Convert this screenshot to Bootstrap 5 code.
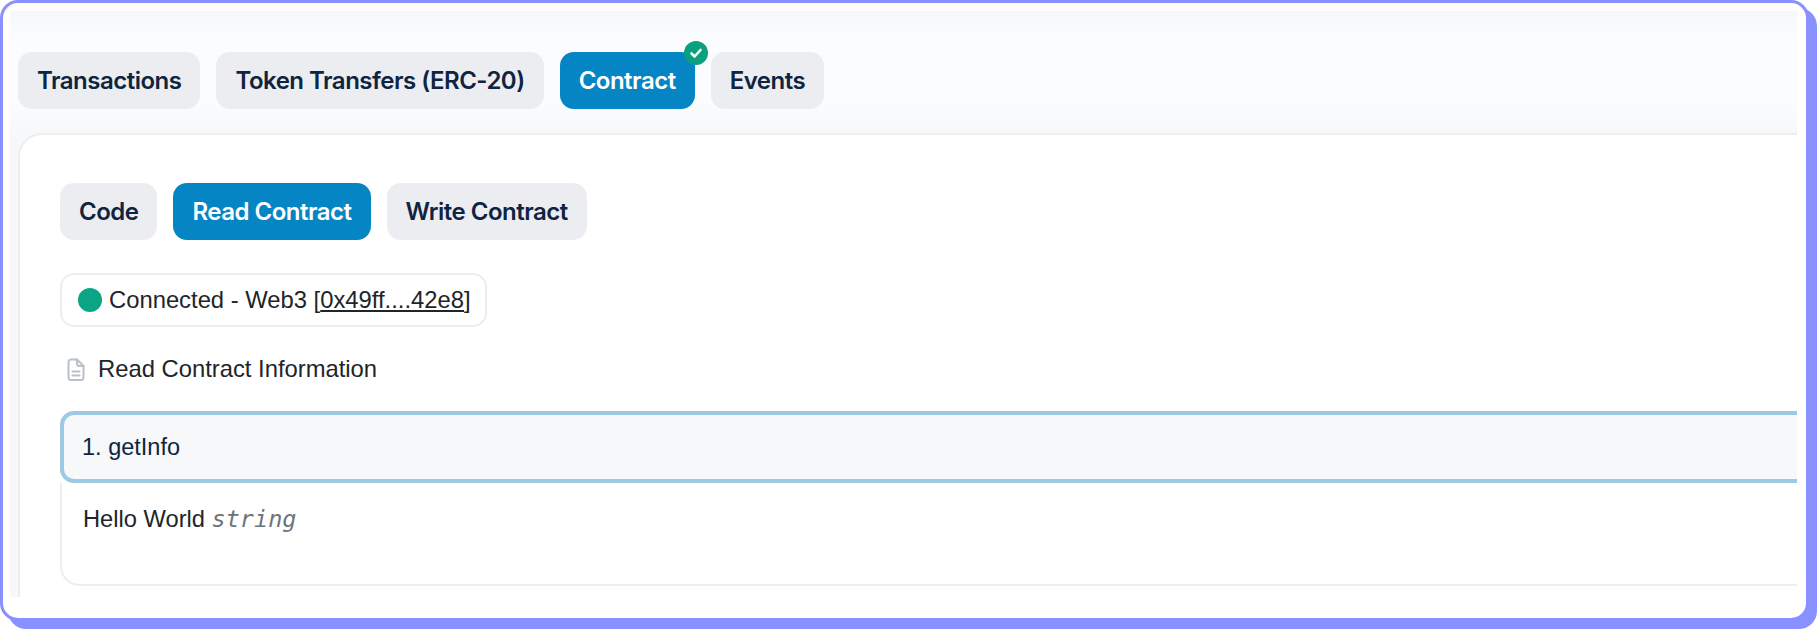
<!DOCTYPE html>
<html lang="en">
<head>
<meta charset="utf-8">
<title>Contract</title>
<link href="https://cdn.jsdelivr.net/npm/bootstrap@5.3.0/dist/css/bootstrap.min.css" rel="stylesheet">
<style>
html, body { margin: 0; background: #fff; height: 629px; overflow: hidden; }
body { font-family: "Liberation Sans", Arial, sans-serif; font-size: 23.8px; color: #212529; }
.frame { width: 1809px; height: 621px; border: 3px solid #8891ff; border-radius: 18px; box-shadow: 8px 8px 0 #8891ff; background: #fff; padding: 8px 9px 21px 7px; }
.stage { height: 100%; overflow: hidden; padding-top: 41px; padding-left: 8px; background: linear-gradient(180deg, #f7f8fa 0, #fbfcfe 30px, #fbfcfe 90px, #f7f8fa 122px, #f7f8fa 100%); }
.tabset { gap: 16px; }
.tabset .nav-link { height: 57px; padding: 0 19px; display: flex; align-items: center; border-radius: 14px; background: #ebedf0; color: #0f2440; font-family: Inter, sans-serif; font-weight: 600; font-size: 24px; letter-spacing: -0.5px; position: relative; white-space: nowrap; }
.tabset .nav-link.active { background: #0685c5; color: #fff; }
.ok-dot { position: absolute; top: -11px; right: -13px; width: 24px; height: 24px; border-radius: 50%; background: #0aa07f; display: flex; align-items: center; justify-content: center; }
.sheet { margin-top: 24px; margin-right: -60px; height: 464px; background: #fff; border: 2px solid #eceef0; border-bottom: 0; border-radius: 24px 24px 0 0; padding: 48px 0 0 40px; }
.status-box { margin-top: 33px; width: 427px; height: 54px; border: 2px solid #eceef0; border-radius: 14px; padding-left: 16px; gap: 7px; background: #fff; white-space: nowrap; }
.status-dot { width: 24px; height: 24px; border-radius: 50%; background: #0aa585; flex: none; }
.status-box a { color: #212529; }
.info-line { margin-top: 26px; height: 32px; padding-left: 7px; gap: 13px; }
.acc { margin-top: 26px; }
.acc-head { height: 72px; background: #f6f8fa; border: 4px solid #9fc9e2; border-right: 0; border-radius: 14px 0 0 14px; padding: 2px 0 0 18px; color: #0f2440; font-size: 23.5px; }
.acc-body { height: 103px; border: 2px solid #eceef0; border-top: 0; border-right: 0; border-radius: 0 0 20px 20px; padding: 19px 0 0 21px; font-size: 23.7px; }
.acc-body em { font-family: "DejaVu Sans Mono", monospace; font-size: 23.5px; color: #6c757d; }
</style>
</head>
<body>
<div class="frame">
  <div class="stage">
    <ul class="nav tabset">
      <li class="nav-item"><a class="nav-link" href="#">Transactions</a></li>
      <li class="nav-item"><a class="nav-link" href="#">Token Transfers (ERC-20)</a></li>
      <li class="nav-item"><a class="nav-link active" href="#">Contract
        <span class="ok-dot"><svg width="14" height="14" viewBox="0 0 14 14" fill="none" stroke="#fff" stroke-width="2.6" stroke-linecap="round" stroke-linejoin="round"><path d="M2.5 7.5 5.6 10.5 11.5 4"/></svg></span></a></li>
      <li class="nav-item"><a class="nav-link" href="#">Events</a></li>
    </ul>
    <div class="sheet">
      <ul class="nav tabset">
        <li class="nav-item"><a class="nav-link" href="#">Code</a></li>
        <li class="nav-item"><a class="nav-link active" href="#">Read Contract</a></li>
        <li class="nav-item"><a class="nav-link" href="#">Write Contract</a></li>
      </ul>
      <div class="status-box d-flex align-items-center">
        <span class="status-dot"></span>
        <span>Connected - Web3 [<a href="#">0x49ff....42e8</a>]</span>
      </div>
      <div class="info-line d-flex align-items-center">
        <svg width="18" height="23" viewBox="0 0 18 23" fill="none" stroke="#b9c0c9" stroke-width="2" stroke-linecap="round" stroke-linejoin="round"><path d="M4 1.5h6l6.5 6.5v11.5a2.5 2.5 0 0 1-2.5 2.5H4a2.5 2.5 0 0 1-2.5-2.5V4A2.5 2.5 0 0 1 4 1.5z"/><path d="M10 1.5v4a2.5 2.5 0 0 0 2.5 2.5h4"/><path d="M5.5 13.5h7M5.5 17.5h7"/></svg>
        <span>Read Contract Information</span>
      </div>
      <div class="acc">
        <div class="acc-head d-flex align-items-center">1. getInfo</div>
        <div class="acc-body">Hello World <em>string</em></div>
      </div>
    </div>
  </div>
</div>
<script src="https://cdn.jsdelivr.net/npm/bootstrap@5.3.0/dist/js/bootstrap.bundle.min.js"></script>
</body>
</html>
